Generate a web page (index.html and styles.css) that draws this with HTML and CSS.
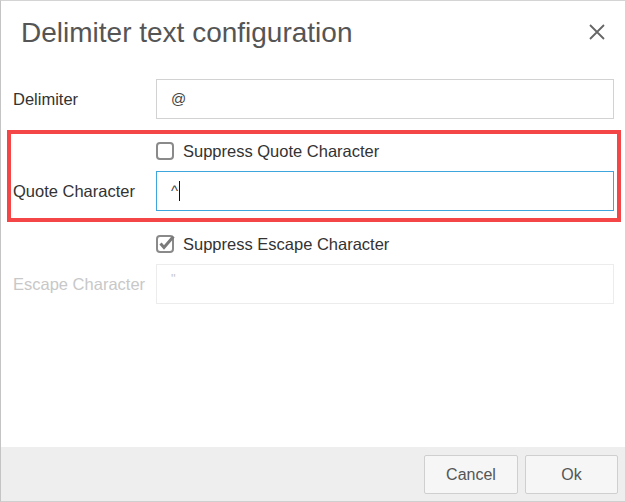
FILE: index.html
```html
<!DOCTYPE html>
<html>
<head>
<meta charset="utf-8">
<link rel="stylesheet" href="styles.css">
</head>
<body>
<div class="dialog">
  <div class="header">
    <h1 class="title">Delimiter text configuration</h1>
    <svg class="close" width="16" height="16" viewBox="0 0 16 16"><path d="M1 1 L15 15 M15 1 L1 15" stroke="#666" stroke-width="1.8" fill="none"/></svg>
  </div>
  <div class="body">
    <div class="row">
      <div class="label">Delimiter</div>
      <div class="field">@</div>
    </div>
    <div class="group">
      <div class="row check-row">
        <div></div>
        <div class="check">
          <svg class="box" width="20" height="20" viewBox="0 0 20 20"><rect x="2" y="2" width="16" height="16" rx="3" fill="#fff" stroke="#8a8a8a" stroke-width="2"/></svg>
          <span>Suppress Quote Character</span>
        </div>
      </div>
      <div class="row">
        <div class="label">Quote Character</div>
        <div class="field focused">^<span class="caret"></span></div>
      </div>
    </div>
    <div class="row check-row second">
      <div></div>
      <div class="check">
        <svg class="box" width="20" height="20" viewBox="0 0 20 20"><rect x="2" y="2" width="16" height="16" rx="3" fill="#fff" stroke="#8a8a8a" stroke-width="2"/><path d="M5.5 9.5 L9 13.5 L18.5 2.5" stroke="#7a7a7a" stroke-width="3" fill="none"/></svg>
        <span>Suppress Escape Character</span>
      </div>
    </div>
    <div class="row">
      <div class="label disabled">Escape Character</div>
      <div class="field disabled">"</div>
    </div>
  </div>
  <div class="footer">
    <button class="btn cancel">Cancel</button>
    <button class="btn ok">Ok</button>
  </div>
</div>
</body>
</html>
```
FILE: styles.css
```css
* { box-sizing: border-box; }
html, body { margin: 0; padding: 0; background: #fff; }
body {
  font-family: "Liberation Sans", Arial, sans-serif;
  color: #333;
  width: 625px;
  height: 502px;
  overflow: hidden;
}
.dialog {
  width: 625px;
  height: 502px;
  border-top: 1px solid #d4d4d4;
  border-left: 1px solid #c4c4c4;
  border-bottom: 1px solid #cfcfcf;
  display: flex;
  flex-direction: column;
}
.header {
  display: flex;
  justify-content: space-between;
  align-items: flex-start;
  padding: 15px 20px 0 20px;
  height: 78px;
}
.title {
  margin: 0;
  font-weight: normal;
  font-size: 28px;
  line-height: 34px;
  color: #555;
}
.close { margin-top: 8px; }
.body {
  flex: 1;
  padding: 0 11px 0 12px;
}
.row {
  display: grid;
  grid-template-columns: 143px 1fr;
  align-items: center;
}
.label {
  font-size: 16.5px;
}
.label.disabled { color: #c8c8c8; }
.field {
  height: 40px;
  border: 1px solid #d2d2d2;
  padding: 9px 14px;
  font-size: 15px;
  line-height: 20px;
  color: #444;
  display: flex;
  align-items: center;
}
.field.focused { border-color: #3ea6dd; }
.field.disabled {
  border-color: #ececec;
  color: #c8c8c8;
  align-items: flex-start;
  font-size: 13px;
  padding-top: 4px;
}
.caret {
  display: inline-block;
  width: 1px;
  height: 20px;
  background: #111;
  margin-left: 1px;
}
.group {
  margin: 11px -7px 0 -6px;
  border: 4px solid #f44646;
  padding: 8px 3px 7px 2px;
}
.check-row { margin-bottom: 11px; }
.check-row.second { margin: 13px 0 11px 0; }
.check {
  display: flex;
  align-items: center;
  gap: 8px;
  font-size: 16.5px;
  height: 18px;
  color: #333;
}
.box { margin-left: -1px; }
.footer {
  height: 54px;
  background: #eeeeee;
  display: flex;
  justify-content: flex-end;
  align-items: flex-start;
  gap: 7px;
  padding: 8px 7px 0 0;
}
.btn {
  font-family: "Liberation Sans", Arial, sans-serif;
  font-size: 16px;
  color: #555;
  background: #f6f6f6;
  border: 1px solid #cfcfcf;
  border-radius: 2px;
  height: 39px;
  padding: 0;
}
.cancel { width: 94px; }
.ok { width: 93px; }
```
